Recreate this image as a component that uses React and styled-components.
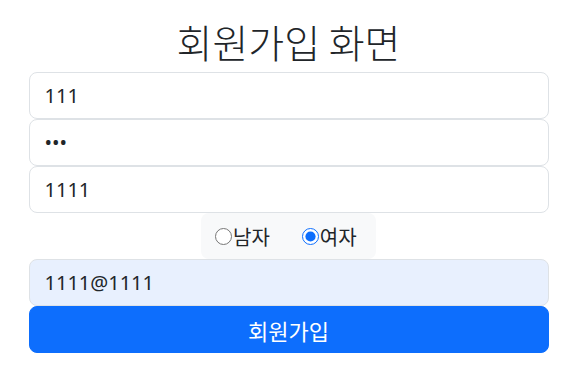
import React from 'react';
import styled, { createGlobalStyle } from 'styled-components';

const GlobalStyle = createGlobalStyle`
    body {
        margin: 0;
        background: #fff;
        font-family: "Noto Sans", "Noto Sans CJK KR", sans-serif;
        color: #212529;
    }
`

const Wrapper = styled.div`
    width: 520px;
    margin: 0 auto;
    display: flex;
    flex-direction: column;
`

const Title = styled.h1`
    margin: 18px 0 8px;
    font-family: "Noto Sans CJK KR", sans-serif;
    font-weight: 300;
    font-size: 39px;
    line-height: 46px;
    text-align: center;
    color: #212529;
`

const Input = styled.input`
    box-sizing: border-box;
    width: 100%;
    height: 47px;
    padding: 0 15px;
    font-family: "Noto Sans", "Noto Sans CJK KR", sans-serif;
    font-size: 20px;
    color: #212529;
    background: ${props => props.$filled ? '#e8f0fe' : '#fff'};
    border: 1px solid #dee2e6;
    border-radius: 8px;
    outline: none;
    margin: 0;
`

const RadioGroup = styled.div`
    align-self: center;
    display: flex;
    align-items: center;
    gap: 32px;
    height: 46px;
    padding: 0 14px;
    box-sizing: border-box;
    width: 175px;
    background: #f8f9fa;
    border-radius: 8px;
`

const RadioLabel = styled.label`
    display: flex;
    align-items: center;
    font-family: "Noto Sans CJK KR", sans-serif;
    font-size: 20px;
    color: #212529;
`

const Radio = styled.input`
    width: 17px;
    height: 17px;
    margin: 0 1px 0 0;
    accent-color: #0d6efd;
`

const Button = styled.button`
    height: 47px;
    width: 100%;
    border: 1px solid #0d6efd;
    border-radius: 8px;
    background: #0d6efd;
    color: #fff;
    font-family: "Noto Sans CJK KR", sans-serif;
    font-size: 22px;
    cursor: pointer;
`

export default function App() {
    return (
        <>
            <GlobalStyle />
            <Wrapper>
                <Title>회원가입 화면</Title>
                <Input type="text" defaultValue="111" />
                <Input type="password" defaultValue="111" />
                <Input type="text" defaultValue="1111" />
                <RadioGroup>
                    <RadioLabel><Radio type="radio" name="gender" />남자</RadioLabel>
                    <RadioLabel><Radio type="radio" name="gender" defaultChecked />여자</RadioLabel>
                </RadioGroup>
                <Input type="email" defaultValue="1111@1111" $filled />
                <Button>회원가입</Button>
            </Wrapper>
        </>
    );
}
